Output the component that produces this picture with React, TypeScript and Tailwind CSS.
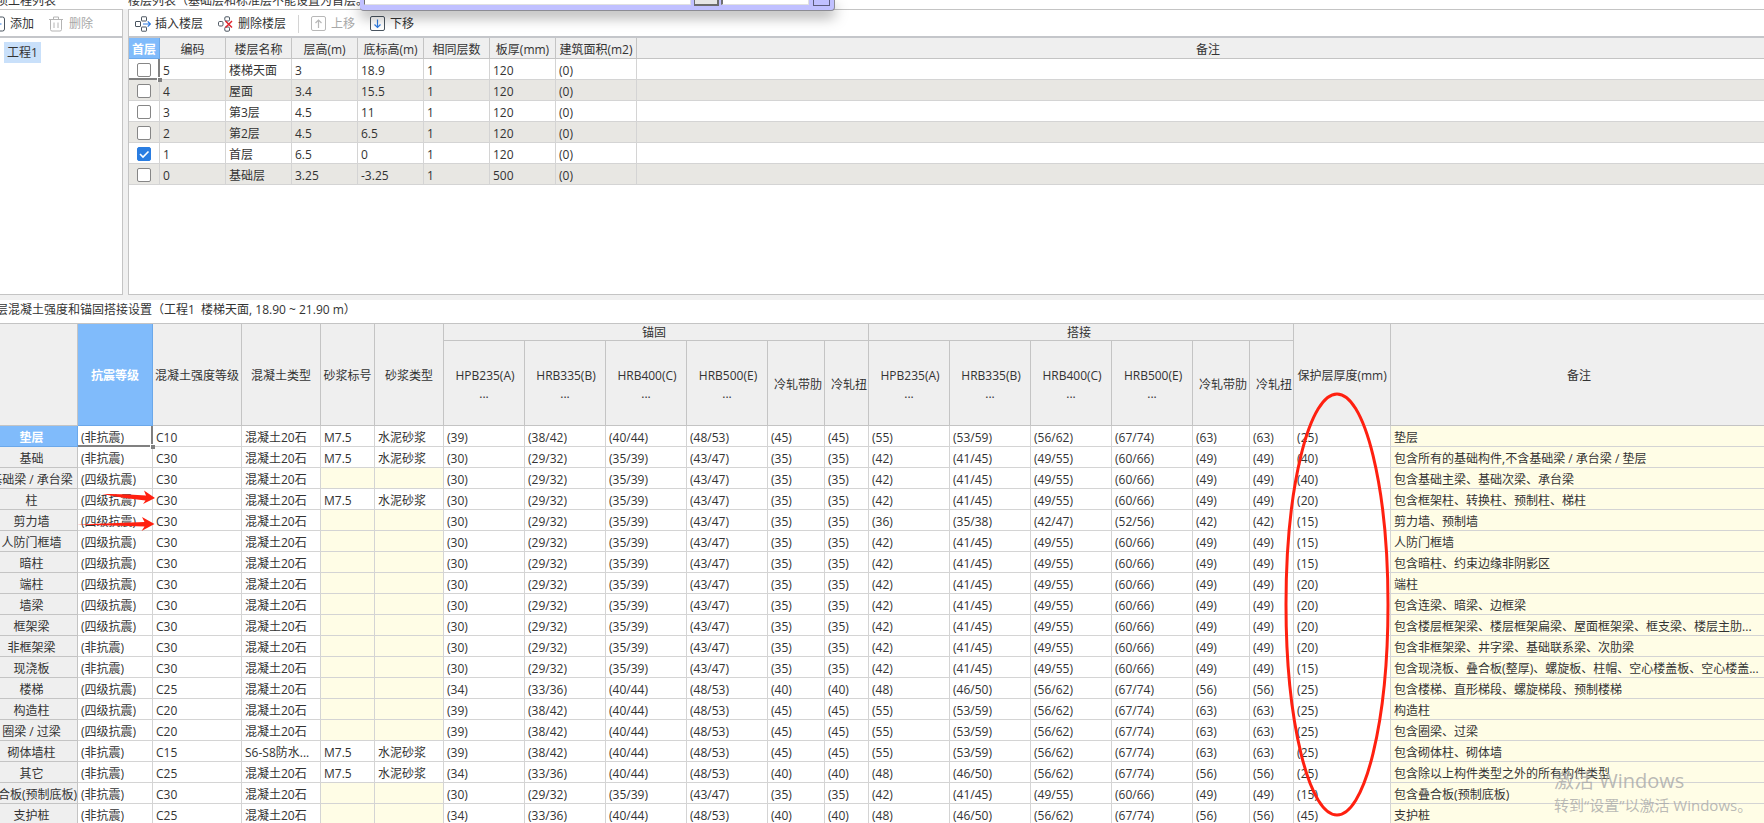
import type { ReactNode } from "react"
import clsx from "clsx"

type Floor = {
  code: string
  name: string
  height: string
  bottom: string
  same: string
  slab: string
  area: string
  first?: boolean
}

type Member = {
  name: string
  seismic: string
  grade: string
  concrete?: string
  mortar?: boolean
  lap?: string[]
  cover: string
  remark: string
}

const floors: Floor[] = [
  { code: "5", name: "楼梯天面", height: "3", bottom: "18.9", same: "1", slab: "120", area: "(0)" },
  { code: "4", name: "屋面", height: "3.4", bottom: "15.5", same: "1", slab: "120", area: "(0)" },
  { code: "3", name: "第3层", height: "4.5", bottom: "11", same: "1", slab: "120", area: "(0)" },
  { code: "2", name: "第2层", height: "4.5", bottom: "6.5", same: "1", slab: "120", area: "(0)" },
  { code: "1", name: "首层", height: "6.5", bottom: "0", same: "1", slab: "120", area: "(0)", first: true },
  { code: "0", name: "基础层", height: "3.25", bottom: "-3.25", same: "1", slab: "500", area: "(0)" },
]

const floorHeads = ["首层", "编码", "楼层名称", "层高(m)", "底标高(m)", "相同层数", "板厚(mm)", "建筑面积(m2)", "备注"]

// anchorage / lap lengths by concrete grade
const low = {
  anchor: ["39", "38/42", "40/44", "48/53", "45", "45"],
  lap: ["55", "53/59", "56/62", "67/74", "63", "63"],
}
const lengths: Record<string, { anchor: string[]; lap: string[] }> = {
  C10: low,
  C15: low,
  C20: low,
  C25: {
    anchor: ["34", "33/36", "40/44", "48/53", "40", "40"],
    lap: ["48", "46/50", "56/62", "67/74", "56", "56"],
  },
  C30: {
    anchor: ["30", "29/32", "35/39", "43/47", "35", "35"],
    lap: ["42", "41/45", "49/55", "60/66", "49", "49"],
  },
}

const members: Member[] = [
  { name: "垫层", seismic: "非抗震", grade: "C10", mortar: true, cover: "25", remark: "垫层" },
  { name: "基础", seismic: "非抗震", grade: "C30", mortar: true, cover: "40", remark: "包含所有的基础构件,不含基础梁 / 承台梁 / 垫层" },
  { name: "基础梁 / 承台梁", seismic: "四级抗震", grade: "C30", cover: "40", remark: "包含基础主梁、基础次梁、承台梁" },
  { name: "柱", seismic: "四级抗震", grade: "C30", mortar: true, cover: "20", remark: "包含框架柱、转换柱、预制柱、梯柱" },
  {
    name: "剪力墙",
    seismic: "四级抗震",
    grade: "C30",
    lap: ["36", "35/38", "42/47", "52/56", "42", "42"],
    cover: "15",
    remark: "剪力墙、预制墙",
  },
  { name: "人防门框墙", seismic: "四级抗震", grade: "C30", cover: "15", remark: "人防门框墙" },
  { name: "暗柱", seismic: "四级抗震", grade: "C30", cover: "15", remark: "包含暗柱、约束边缘非阴影区" },
  { name: "端柱", seismic: "四级抗震", grade: "C30", cover: "20", remark: "端柱" },
  { name: "墙梁", seismic: "四级抗震", grade: "C30", cover: "20", remark: "包含连梁、暗梁、边框梁" },
  { name: "框架梁", seismic: "四级抗震", grade: "C30", cover: "20", remark: "包含楼层框架梁、楼层框架扁梁、屋面框架梁、框支梁、楼层主肋..." },
  { name: "非框架梁", seismic: "非抗震", grade: "C30", cover: "20", remark: "包含非框架梁、井字梁、基础联系梁、次肋梁" },
  { name: "现浇板", seismic: "非抗震", grade: "C30", cover: "15", remark: "包含现浇板、叠合板(整厚)、螺旋板、柱帽、空心楼盖板、空心楼盖..." },
  { name: "楼梯", seismic: "四级抗震", grade: "C25", cover: "25", remark: "包含楼梯、直形梯段、螺旋梯段、预制楼梯" },
  { name: "构造柱", seismic: "四级抗震", grade: "C20", cover: "25", remark: "构造柱" },
  { name: "圈梁 / 过梁", seismic: "四级抗震", grade: "C20", cover: "25", remark: "包含圈梁、过梁" },
  { name: "砌体墙柱", seismic: "非抗震", grade: "C15", concrete: "S6-S8防水...", mortar: true, cover: "25", remark: "包含砌体柱、砌体墙" },
  { name: "其它", seismic: "非抗震", grade: "C25", mortar: true, cover: "25", remark: "包含除以上构件类型之外的所有构件类型" },
  { name: "叠合板(预制底板)", seismic: "非抗震", grade: "C30", cover: "15", remark: "包含叠合板(预制底板)" },
  { name: "支护桩", seismic: "非抗震", grade: "C25", cover: "45", remark: "支护桩" },
]

const bars = ["HPB235(A)", "HRB335(B)", "HRB400(C)", "HRB500(E)"]

function AddIcon() {
  return (
    <svg width="16" height="16" viewBox="0 0 16 16" fill="none">
      <rect x="0.500" y="1" width="14" height="14" rx="2" stroke="#4a5560" />
      <path d="M7.500 4v8M3.500 8h8" stroke="#2f7be0" />
    </svg>
  )
}

function TrashIcon() {
  return (
    <svg width="16" height="16" viewBox="0 0 16 16" fill="none" stroke="#b4b4b4">
      <path d="M0 3.500h14M4.500 3V1h5v2M1.500 3.500v10q0 1.500 1.500 1.500h8q1.500 0 1.500-1.500v-10M5 6.500v5.500M9 6.500v5.500" />
    </svg>
  )
}

function InsertFloorIcon() {
  return (
    <svg width="16" height="16" viewBox="0 0 16 16" fill="none" stroke="#4a5560">
      <rect x="0.500" y="5.500" width="5" height="5" rx="0.500" />
      <rect x="6.500" y="0.800" width="5" height="4.200" rx="0.500" />
      <rect x="6.500" y="11" width="5" height="4.200" rx="0.500" />
      <path d="M8 8h7.200M12.700 5.300 15.400 8l-2.700 2.700" stroke="#2f7be0" strokeWidth="1.200" />
    </svg>
  )
}

function DeleteFloorIcon() {
  return (
    <svg width="16" height="16" viewBox="0 0 16 16" fill="none" stroke="#4a5560">
      <rect x="0.500" y="5.500" width="4.500" height="4.500" rx="1.200" />
      <rect x="6.800" y="0.800" width="4.700" height="4.200" rx="1.200" />
      <rect x="6.800" y="11" width="4.700" height="4.200" rx="1.200" />
      <path d="M7.500 5 14 11.500M14 5 7.500 11.500" stroke="#e0242c" strokeWidth="1.500" />
    </svg>
  )
}

function MoveIcon({ up }: { up?: boolean }) {
  return (
    <svg width="16" height="16" viewBox="0 0 16 16" fill="none">
      <rect x="0.500" y="0.500" width="14" height="14" rx="1.500" stroke={up ? "#b8b8b8" : "#4a5560"} />
      <path
        d={up ? "M7.500 12V4M4.500 7l3-3 3 3" : "M7.500 3.500v8M4.500 8.500l3 3 3-3"}
        stroke={up ? "#b8b8b8" : "#2f7be0"}
        strokeWidth="1.200"
      />
    </svg>
  )
}

function ToolButton({ icon, children, disabled }: { icon: ReactNode; children: ReactNode; disabled?: boolean }) {
  return (
    <button type="button" disabled={disabled} className="flex items-center gap-1 whitespace-nowrap disabled:text-[#a8a8a8]">
      {icon}
      {children}
    </button>
  )
}

function CellCursor() {
  return (
    <>
      <span className="absolute inset-x-0 -bottom-px h-0.5 bg-[#808080]" />
      <span className="absolute inset-y-0 -right-px w-0.5 bg-[#808080]" />
      <span className="absolute -bottom-[3px] -right-[3px] z-10 h-[5px] w-[5px] border-l border-t border-white bg-[#808080]" />
    </>
  )
}

function FirstFloorBox({ floor }: { floor: Floor }) {
  return (
    <span className="relative mx-auto block h-3.5 w-3.5">
      <input
        type="checkbox"
        aria-label={floor.name}
        defaultChecked={floor.first}
        className="peer block h-3.5 w-3.5 appearance-none rounded-[2px] border border-[#868686] bg-white checked:border-[#2a7de1] checked:bg-[#2a7de1]"
      />
      <svg className="pointer-events-none absolute inset-0 hidden peer-checked:block" width="14" height="14" viewBox="0 0 14 14" fill="none">
        <path d="m3 7 3 3 5.500-5.500" stroke="#fff" strokeWidth="1.600" />
      </svg>
    </span>
  )
}

const head = "border-b border-r border-[#c4c4c4] bg-[#efefef] px-0 pb-0 pt-[3px] font-normal whitespace-nowrap"
const activeHead = "border-b border-r border-[#6ba8ea] bg-[#80bbfb] px-0 pb-0 pt-[3px] font-bold text-white whitespace-nowrap"
const cell = "border-b border-r border-[#d4d4d4] pb-0 pl-[3px] pr-0 pt-[3px] whitespace-nowrap"

function FloorTable() {
  return (
    <table className="w-full table-fixed border-separate border-spacing-0 leading-4">
      <colgroup>
        <col className="w-[31px]" />
        {floorHeads.slice(1, 7).map((h) => (
          <col key={h} className="w-[66px]" />
        ))}
        <col className="w-[81px]" />
        <col />
      </colgroup>
      <thead>
        <tr className="h-[21px]">
          {floorHeads.map((h, i) => (
            <th key={h} className={i === 0 ? activeHead : head}>
              {h}
            </th>
          ))}
        </tr>
      </thead>
      <tbody>
        {floors.map((f, i) => (
          <tr key={f.code} className={clsx("h-[21px]", i % 2 ? "bg-[#e8e7e3]" : "bg-white")}>
            <td className="relative border-b border-r border-[#d4d4d4] px-0 pb-0 pt-px">
              <FirstFloorBox floor={f} />
              {i === 0 && <CellCursor />}
            </td>
            {[f.code, f.name, f.height, f.bottom, f.same, f.slab, f.area, ""].map((v, k) => (
              <td key={k} className={cell}>
                {v}
              </td>
            ))}
          </tr>
        ))}
      </tbody>
    </table>
  )
}

function BarHeads() {
  return (
    <>
      {bars.map((b) => (
        <th key={b} className={clsx(head, "leading-[18px]")}>
          <span className="block pl-0.5">{b}</span>
          <span className="block">...</span>
        </th>
      ))}
      <th className={clsx(head, "text-right")}>
        <span className="pr-0.5">冷轧带肋</span>
      </th>
      <th className={clsx(head, "text-right")}>
        <span className="pr-px">冷轧扭</span>
      </th>
    </>
  )
}

function MemberTable() {
  return (
    <table className="w-full table-fixed border-separate border-spacing-0 border-t border-[#c4c4c4] leading-4">
      <colgroup>
        <col className="w-[94px]" />
        <col className="w-[75px]" />
        <col className="w-[89px]" />
        <col className="w-[79px]" />
        <col className="w-[54px]" />
        <col className="w-[69px]" />
        {[0, 1].map((g) => [
          ...bars.map((b) => <col key={b + g} className="w-[81px]" />),
          <col key={"d" + g} className="w-[57px]" />,
          <col key={"n" + g} className="w-[44px]" />,
        ])}
        <col className="w-[97px]" />
        <col />
      </colgroup>
      <thead>
        <tr className="h-[17px]">
          <th rowSpan={2} className={head} />
          <th rowSpan={2} className={activeHead}>抗震等级</th>
          <th rowSpan={2} className={head}>混凝土强度等级</th>
          <th rowSpan={2} className={head}>混凝土类型</th>
          <th rowSpan={2} className={head}>砂浆标号</th>
          <th rowSpan={2} className={head}>砂浆类型</th>
          {["锚固", "搭接"].map((g) => (
            <th key={g} colSpan={6} className="border-b border-r border-[#c4c4c4] bg-[#efefef] py-0 pl-0 pr-1 pt-0.5 font-normal leading-[14px]">
              {g}
            </th>
          ))}
          <th rowSpan={2} className={head}>保护层厚度(mm)</th>
          <th rowSpan={2} className={head}>备注</th>
        </tr>
        <tr className="h-[85px]">
          <BarHeads />
          <BarHeads />
        </tr>
      </thead>
      <tbody>
        {members.map((m, i) => {
          const l = lengths[m.grade]
          return (
            <tr key={m.name} className="h-[21px]">
              <th className={i === 0 ? activeHead : head}>
                <span className="pl-0.5">{m.name}</span>
              </th>
              <td className={clsx(cell, "relative")}>
                ({m.seismic}){i === 0 && <CellCursor />}
              </td>
              <td className={cell}>{m.grade}</td>
              <td className={cell}>{m.concrete ?? "混凝土20石"}</td>
              <td className={clsx(cell, !m.mortar && "bg-[#fffde6]")}>{m.mortar && "M7.5"}</td>
              <td className={clsx(cell, !m.mortar && "bg-[#fffde6]")}>{m.mortar && "水泥砂浆"}</td>
              {[...l.anchor, ...(m.lap ?? l.lap)].map((v, k) => (
                <td key={k} className={cell}>
                  ({v})
                </td>
              ))}
              <td className={cell}>({m.cover})</td>
              <td className={clsx(cell, "overflow-hidden bg-[#fffde6]")}>{m.remark}</td>
            </tr>
          )
        })}
      </tbody>
    </table>
  )
}

// lower edge of the tool window that floats over the title row
function FloatingWindow() {
  return (
    <div className="absolute left-[360px] top-0 flex h-[11px] w-[475px] items-start rounded-b-[4px] border-b border-r border-[#8c8c94] bg-[#c0c0ff] pl-1 shadow-[0_6px_14px_rgba(0,0,0,0.35)]">
      <input aria-label="值" className="h-[5px] min-w-0 flex-1 border-b border-l border-r border-b-[#e0e0e0] border-l-[#707070] border-r-[#e0e0e0] bg-white" />
      <button type="button" aria-label="选择" className="ml-[3px] h-1.5 w-[25px] border-b-2 border-l border-r-2 border-[#6c6c6c] bg-[#e6e6e6]" />
      <input aria-label="名称" className="ml-0.5 h-[5px] w-[88px] border-b border-l-2 border-r border-b-[#e0e0e0] border-l-[#707070] border-r-[#e0e0e0] bg-white" />
      <button type="button" aria-label="关闭" className="ml-1 mr-1 h-1.5 w-[17px] border-x border-b border-[#5c5c7c] bg-[#c0c0ff]" />
    </div>
  )
}

function Marks() {
  return (
    <svg className="pointer-events-none absolute left-0 top-0" width="1400" height="823" viewBox="0 0 1400 823" fill="none">
      <ellipse cx="1337" cy="604.500" rx="51" ry="210.500" stroke="#ff2010" strokeWidth="3" />
      <path d="M102 494Q125 493.500 146 495.500L144 490.500 155 498 143 504 145.500 500.500Q124 498.500 102 494Z" fill="#ff2010" />
      <path d="M77 524.500 144.500 522 142 517 154.500 524 141.500 531 144.500 526.500Z" fill="#ff2010" />
    </svg>
  )
}

export default function App() {
  return (
    <div className="relative h-screen overflow-hidden bg-white font-['Open_Sans','Noto_Sans_CJK_SC',sans-serif] text-[12px] leading-[18px] text-[#333333]">
      <div className="-ml-4 -mt-2">
        <div className="flex h-[17px] gap-[5px] pt-px leading-4 whitespace-nowrap">
          <h2 className="w-[139px]">单项工程列表</h2>
          <h2>楼层列表（基础层和标准层不能设置为首层。</h2>
        </div>

        <div className="flex h-[291px] gap-[5px] bg-[#f0f0f0] pb-[5px]">
          <aside className="w-[139px] border border-[#c4c4c4] bg-white">
            <div className="flex h-7 items-center gap-[15px] border-b-2 border-[#c4c6ca] pl-[5px] pt-0.5">
              <ToolButton icon={<AddIcon />}>添加</ToolButton>
              <ToolButton icon={<TrashIcon />} disabled>
                删除
              </ToolButton>
            </div>
            <button type="button" className="ml-[19px] mt-1 h-[21px] bg-[#c9e0fa] px-[3px]">
              工程1
            </button>
          </aside>

          <section className="-mr-4 min-w-0 flex-1 border-y border-l border-[#c4c4c4] bg-white">
            <div className="flex h-7 items-center gap-3 border-b-2 border-[#c4c6ca] pl-1.5 pt-0.5">
              <div className="flex gap-[15px]">
                <ToolButton icon={<InsertFloorIcon />}>插入楼层</ToolButton>
                <ToolButton icon={<DeleteFloorIcon />}>删除楼层</ToolButton>
              </div>
              <span className="h-[18px] w-px bg-[#d4d4d4]" />
              <div className="flex gap-[15px]">
                <ToolButton icon={<MoveIcon up />} disabled>
                  上移
                </ToolButton>
                <ToolButton icon={<MoveIcon />}>下移</ToolButton>
              </div>
            </div>
            <FloorTable />
          </section>
        </div>

        <h2 className="h-[23px] whitespace-pre pt-px">楼层混凝土强度和锚固搭接设置（工程1  楼梯天面, 18.90 ~ 21.90 m）</h2>
        <div className="-mr-1">
          <MemberTable />
        </div>
      </div>

      <FloatingWindow />
      <Marks />

      <div className="pointer-events-none absolute bottom-1.5 right-2.5 w-[200px] whitespace-nowrap text-[#a8a8a8]/80">
        <p className="text-[20px] leading-6">激活 Windows</p>
        <p className="text-[15px] leading-6">转到“设置”以激活 Windows。</p>
      </div>
    </div>
  )
}
